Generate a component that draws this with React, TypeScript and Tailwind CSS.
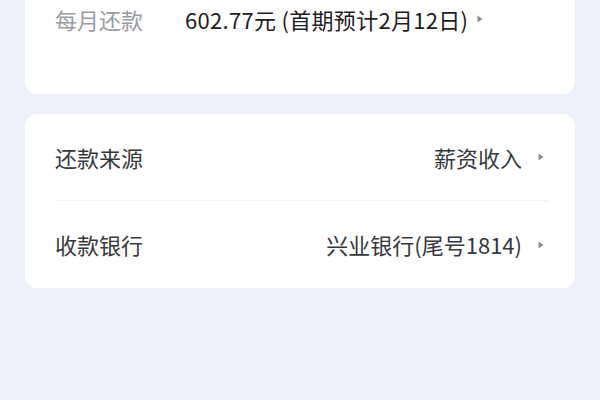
import { ReactNode } from 'react';

const font = { fontFamily: '"Noto Sans CJK SC", "Noto Sans", sans-serif' };

function Caret({ gap = 'ml-[14px]' }: { gap?: string }) {
  return (
    <svg width="8" height="10" viewBox="0 0 8 10" className={`${gap} shrink-0`}>
      <path d="M1.5 1.5 L6.5 5 L1.5 8.5 Z" fill="#8a8d94" />
    </svg>
  );
}

function Row({ label, value, divider }: { label: string; value: ReactNode; divider?: boolean }) {
  return (
    <div className={`flex items-center justify-between h-[87px] ${divider ? 'border-b border-[#f0f1f4]' : ''}`}>
      <span className="text-[22px] text-[#36383c]">{label}</span>
      <span className="flex items-center text-[22px] text-[#36383c] pr-[2px]">
        {value}
        <Caret gap="ml-[15px]" />
      </span>
    </div>
  );
}

export default function App() {
  return (
    <div className="w-[600px] h-[400px] bg-[#eef0f9] px-[25px] overflow-hidden" style={font}>
      {/* monthly repayment card, top clipped */}
      <div className="bg-white rounded-b-[12px] h-[94px] px-[30px] pt-[3px]">
        <div className="flex items-center h-[32px]">
          <span className="text-[22px] text-[#9a9ca2] w-[130px]">每月还款</span>
          <span className="flex items-center text-[22px] text-[#1f2023] tracking-[0.3px]">
            602.77元 (首期预计2月12日)
            <Caret gap="ml-[8px]" />
          </span>
        </div>
      </div>

      {/* source / bank card */}
      <div className="bg-white rounded-[12px] mt-[20px] pl-[30px] pr-[28px]">
        <Row label="还款来源" value="薪资收入" divider />
        <Row label="收款银行" value="兴业银行(尾号1814)" />
      </div>
    </div>
  );
}
